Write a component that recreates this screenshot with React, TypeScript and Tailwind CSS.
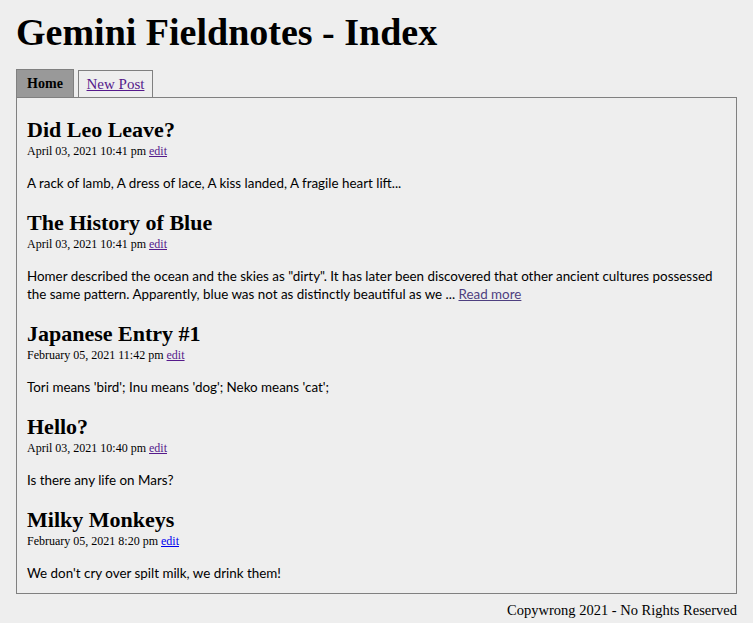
import React from "react";

const posts = [
  { title: "Did Leo Leave?", date: "April 03, 2021 10:41 pm", body: "A rack of lamb, A dress of lace, A kiss landed, A fragile heart lift...", more: false, blue: false },
  { title: "The History of Blue", date: "April 03, 2021 10:41 pm", body: "Homer described the ocean and the skies as \"dirty\". It has later been discovered that other ancient cultures possessed the same pattern. Apparently, blue was not as distinctly beautiful as we ...", more: true, blue: false },
  { title: "Japanese Entry #1", date: "February 05, 2021 11:42 pm", body: "Tori means 'bird'; Inu means 'dog'; Neko means 'cat';", more: false, blue: false },
  { title: "Hello?", date: "April 03, 2021 10:40 pm", body: "Is there any life on Mars?", more: false, blue: false },
  { title: "Milky Monkeys", date: "February 05, 2021 8:20 pm", body: "We don't cry over spilt milk, we drink them!", more: false, blue: true },
];

export default function App() {
  return (
    <div className="min-h-[623px] bg-[#eeeeee] px-4 pt-[10px] text-black">
      <h1 className="font-['Liberation_Serif',serif] text-[38px] font-bold leading-[44px]">Gemini Fieldnotes - Index</h1>
      <div className="mt-[15px] flex items-end gap-[4px]">
        <div className="flex h-[28px] w-[58px] items-center justify-center border border-b-0 border-[#808080] bg-[#999999] font-['Liberation_Serif',serif] text-[14px] font-bold">Home</div>
        <div className="flex h-[27px] w-[75px] items-center justify-center border border-b-0 border-[#808080] font-['Liberation_Serif',serif] text-[15px] text-[#551a8b] underline">New Post</div>
      </div>
      <div className="border border-[#808080] px-[10px] pt-[18px] pb-0">
        {posts.map((p) => (
          <div key={p.title} className="pb-[5px] last:pb-0 [&:last-child>p]:mb-[11px]">
            <h2 className="font-['Liberation_Serif',serif] text-[22px] font-bold leading-[28px]">{p.title}</h2>
            <div className="font-['Liberation_Serif',serif] text-[12px] leading-[14px]">
              {p.date}{" "}
              <span className={p.blue ? "text-[#0000ee] underline" : "text-[#551a8b] underline"}>edit</span>
            </div>
            <p className="mt-[16px] mb-[12px] font-['Lato',sans-serif] text-[13.4px] leading-[18px]">
              {p.body}
              {p.more && (
                <>
                  {" "}
                  <span className="text-[#4e3f80] underline">Read more</span>
                </>
              )}
            </p>
          </div>
        ))}
      </div>
      <div className="pt-[6px] text-right font-['Liberation_Serif',serif] text-[14.5px]">Copywrong 2021 - No Rights Reserved</div>
    </div>
  );
}
